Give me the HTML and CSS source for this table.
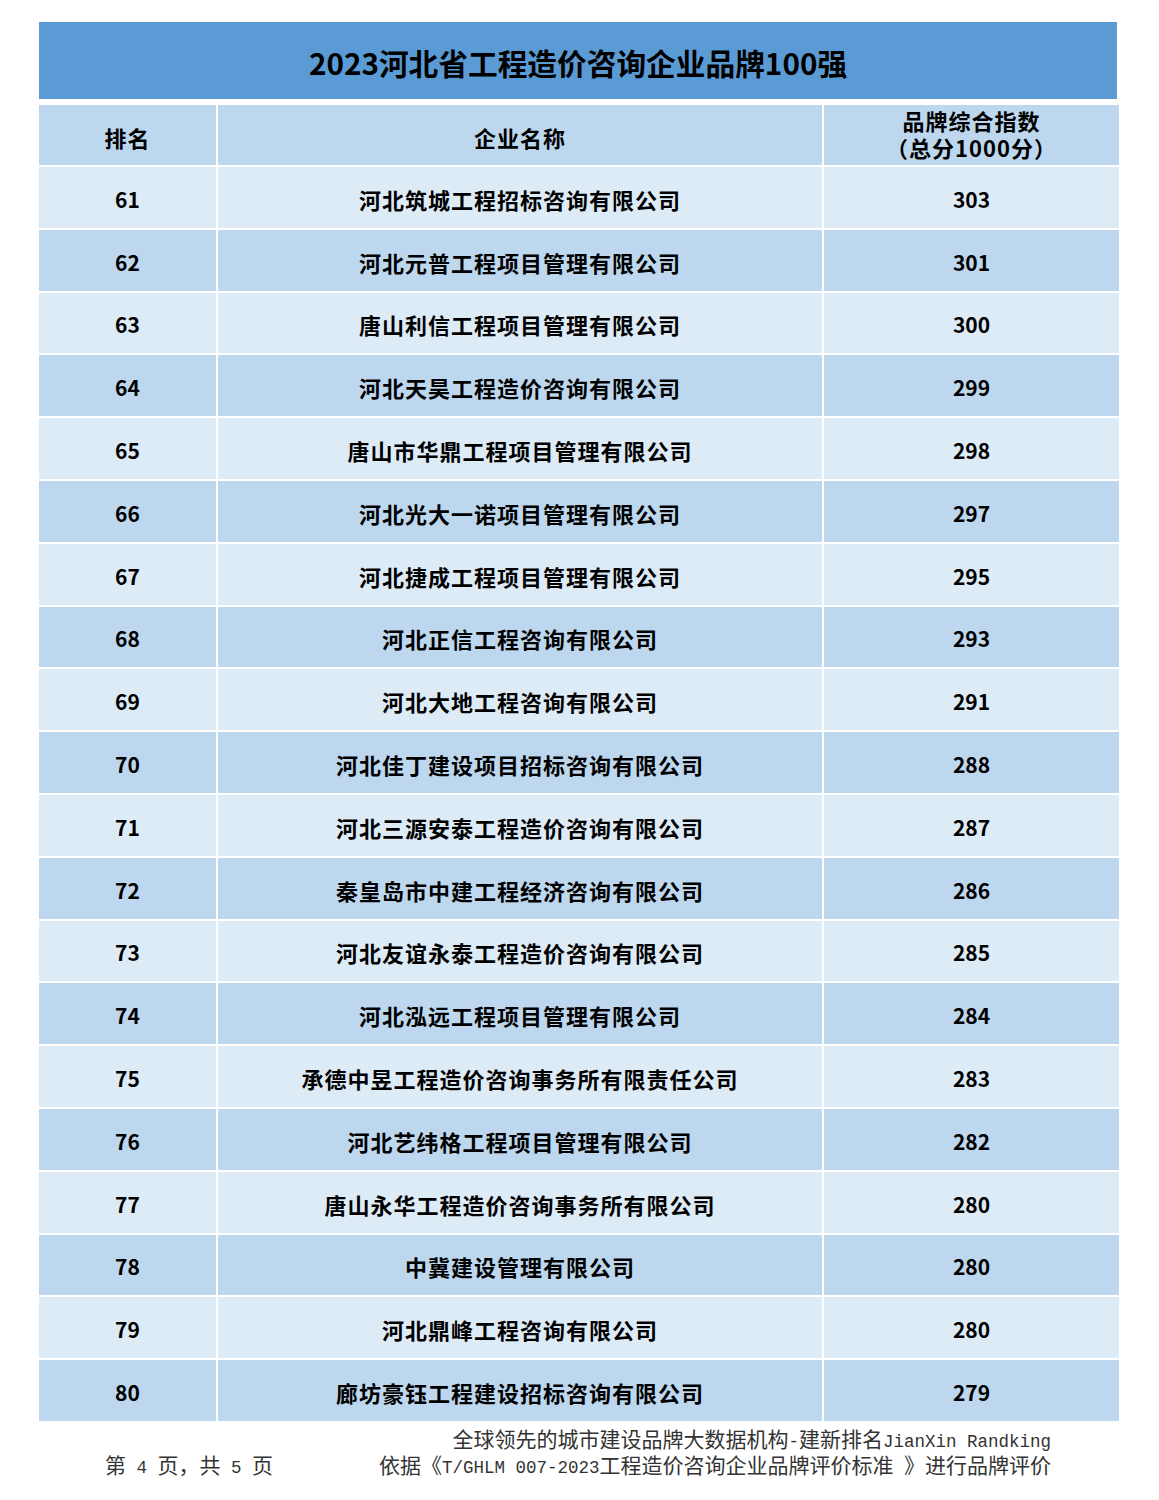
FILE: index.html
```html
<!DOCTYPE html>
<html lang="zh-CN">
<head>
<meta charset="utf-8">
<title>2023河北省工程造价咨询企业品牌100强</title>
<link rel="stylesheet" href="styles.css">
</head>
<body>
<div class="page">
  <div class="title">2023河北省工程造价咨询企业品牌100强</div>
  <div class="table">
    <div class="cell head">排名</div>
    <div class="cell head">企业名称</div>
    <div class="cell head two"><div class="ln">品牌综合指数</div><div class="ln">（总分1000分）</div></div>

    <div class="cell light num">61</div><div class="cell light name">河北筑城工程招标咨询有限公司</div><div class="cell light num">303</div>
    <div class="cell dark num">62</div><div class="cell dark name">河北元普工程项目管理有限公司</div><div class="cell dark num">301</div>
    <div class="cell light num">63</div><div class="cell light name">唐山利信工程项目管理有限公司</div><div class="cell light num">300</div>
    <div class="cell dark num">64</div><div class="cell dark name">河北天昊工程造价咨询有限公司</div><div class="cell dark num">299</div>
    <div class="cell light num">65</div><div class="cell light name">唐山市华鼎工程项目管理有限公司</div><div class="cell light num">298</div>
    <div class="cell dark num">66</div><div class="cell dark name">河北光大一诺项目管理有限公司</div><div class="cell dark num">297</div>
    <div class="cell light num">67</div><div class="cell light name">河北捷成工程项目管理有限公司</div><div class="cell light num">295</div>
    <div class="cell dark num">68</div><div class="cell dark name">河北正信工程咨询有限公司</div><div class="cell dark num">293</div>
    <div class="cell light num">69</div><div class="cell light name">河北大地工程咨询有限公司</div><div class="cell light num">291</div>
    <div class="cell dark num">70</div><div class="cell dark name">河北佳丁建设项目招标咨询有限公司</div><div class="cell dark num">288</div>
    <div class="cell light num">71</div><div class="cell light name">河北三源安泰工程造价咨询有限公司</div><div class="cell light num">287</div>
    <div class="cell dark num">72</div><div class="cell dark name">秦皇岛市中建工程经济咨询有限公司</div><div class="cell dark num">286</div>
    <div class="cell light num">73</div><div class="cell light name">河北友谊永泰工程造价咨询有限公司</div><div class="cell light num">285</div>
    <div class="cell dark num">74</div><div class="cell dark name">河北泓远工程项目管理有限公司</div><div class="cell dark num">284</div>
    <div class="cell light num">75</div><div class="cell light name">承德中昱工程造价咨询事务所有限责任公司</div><div class="cell light num">283</div>
    <div class="cell dark num">76</div><div class="cell dark name">河北艺纬格工程项目管理有限公司</div><div class="cell dark num">282</div>
    <div class="cell light num">77</div><div class="cell light name">唐山永华工程造价咨询事务所有限公司</div><div class="cell light num">280</div>
    <div class="cell dark num">78</div><div class="cell dark name">中冀建设管理有限公司</div><div class="cell dark num">280</div>
    <div class="cell light num">79</div><div class="cell light name">河北鼎峰工程咨询有限公司</div><div class="cell light num">280</div>
    <div class="cell dark num">80</div><div class="cell dark name">廊坊豪钰工程建设招标咨询有限公司</div><div class="cell dark num">279</div>
  </div>
  <div class="footer">
    <div class="pager">第<span class="lat"> 4 </span>页，共<span class="lat"> 5 </span>页</div>
    <div class="note">
      <div>全球领先的城市建设品牌大数据机构<span class="lat">-</span>建新排名<span class="lat">JianXin Randking</span></div>
      <div>依据《<span class="lat">T/GHLM 007-2023</span>工程造价咨询企业品牌评价标准<span class="lat"> </span>》进行品牌评价</div>
    </div>
  </div>
</div>
</body>
</html>
```

FILE: styles.css
```css
html, body {
  margin: 0;
  padding: 0;
  background: #ffffff;
}

.page {
  width: 1080px;
  padding: 22px 0 0 39px;
  font-family: "Noto Sans CJK SC", "Noto Sans", sans-serif;
  color: #000;
}

.title {
  width: 1078px;
  height: 77px;
  background: #5b9bd5;
  display: flex;
  align-items: center;
  justify-content: center;
  font-size: 29.7px;
  font-weight: 700;
  padding-top: 3px;
  box-sizing: border-box;
}

.table {
  margin-top: 6px;
  display: grid;
  grid-template-columns: 177px 604px 295px;
  grid-template-rows: 60px;
  grid-auto-rows: 60.8px;
  gap: 2px;
  width: 1080px;
}

.cell {
  display: flex;
  align-items: center;
  justify-content: center;
  font-size: 22px;
  font-weight: 700;
  padding-top: 3px;
  box-sizing: border-box;
}

.head {
  background: #bdd7ee;
  letter-spacing: 1px;
}

.two {
  flex-direction: column;
  padding-top: 0;
  padding-bottom: 3px;
}

.ln {
  height: 27px;
  line-height: 27px;
  overflow: visible;
}

.light {
  background: #ddebf7;
}

.dark {
  background: #bdd7ee;
}

.name {
  letter-spacing: 1px;
}

.num {
  font-size: 21px;
}

.footer {
  display: flex;
  align-items: flex-end;
  width: 1012px;
  padding-top: 4px;
  font-family: "Noto Sans CJK SC", serif;
  font-size: 21px;
  color: #333;
  line-height: 26px;
}

.footer .note > div,
.footer .pager {
  height: 26px;
}

.lat {
  font-family: "Liberation Mono", monospace;
  font-size: 17.5px;
  line-height: 1;
  white-space: pre;
}

.pager {
  margin-left: 66px;
  white-space: pre;
}

.note {
  margin-left: auto;
  text-align: right;
  white-space: nowrap;
}
```
